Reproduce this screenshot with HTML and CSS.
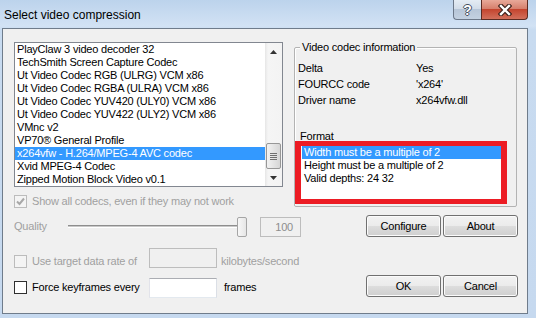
FILE: index.html
```html
<!DOCTYPE html>
<html lang="en">

<head>
    <meta charset="UTF-8">
    <title>Select video compression</title>
    <link rel="stylesheet" href="styles.css">
</head>

<body>
    <div class="window">
        <div class="titlebar">
            <span class="title">Select video compression</span>
            <div class="caption-btns">
                <span class="cap help">?</span>
                <span class="cap close">
                    <svg width="14" height="12" viewBox="0 0 14 12">
                        <path d="M3 2 L11 10 M11 2 L3 10" stroke="#3e221c" stroke-width="4.6" stroke-linecap="square" fill="none" />
                        <path d="M3 2 L11 10 M11 2 L3 10" stroke="#fff" stroke-width="2.4" stroke-linecap="square" fill="none" />
                    </svg>
                </span>
            </div>
        </div>

        <div class="client">
            <div class="top">
                <div class="left-col">
                    <div class="listbox">
                        <ul class="items">
                            <li>PlayClaw 3 video decoder 32</li>
                            <li>TechSmith Screen Capture Codec</li>
                            <li>Ut Video Codec RGB (ULRG) VCM x86</li>
                            <li>Ut Video Codec RGBA (ULRA) VCM x86</li>
                            <li>Ut Video Codec YUV420 (ULY0) VCM x86</li>
                            <li>Ut Video Codec YUV422 (ULY2) VCM x86</li>
                            <li>VMnc v2</li>
                            <li>VP70® General Profile</li>
                            <li class="selected">x264vfw - H.264/MPEG-4 AVC codec</li>
                            <li>Xvid MPEG-4 Codec</li>
                            <li>Zipped Motion Block Video v0.1</li>
                        </ul>
                        <div class="scrollbar">
                            <div class="sb-btn">
                                <svg width="7" height="4" viewBox="0 0 7 4"><path d="M0 4 L3.5 0 L7 4 Z" fill="#333" /></svg>
                            </div>
                            <div class="sb-track">
                                <div class="sb-thumb">
                                    <svg width="7" height="8" viewBox="0 0 7 8">
                                        <path d="M0 1.5 H7 M0 3.5 H7 M0 5.5 H7 M0 7.5 H7" stroke="#6f6f6f" stroke-width="1" />
                                    </svg>
                                </div>
                            </div>
                            <div class="sb-btn">
                                <svg width="7" height="4" viewBox="0 0 7 4"><path d="M0 0 L3.5 4 L7 0 Z" fill="#333" /></svg>
                            </div>
                        </div>
                    </div>
                    <label class="check disabled show-all">
                        <span class="box">
                            <svg width="11" height="11" viewBox="0 0 11 11"><path d="M2 5.5 L4.5 8 L9 2.5" stroke="#a8a8a8" stroke-width="2" fill="none" /></svg>
                        </span>
                        Show all codecs, even if they may not work
                    </label>
                </div>

                <div class="group">
                    <span class="legend">Video codec information</span>
                    <div class="info">
                        <span>Delta</span><span>Yes</span>
                        <span>FOURCC code</span><span>'x264'</span>
                        <span>Driver name</span><span>x264vfw.dll</span>
                    </div>
                    <div class="format-label">Format</div>
                    <ul class="format-list">
                        <li class="selected">Width must be a multiple of 2</li>
                        <li>Height must be a multiple of 2</li>
                        <li>Valid depths: 24 32</li>
                    </ul>
                </div>
            </div>

            <div class="row row-quality">
                <span class="quality-label">Quality</span>
                <div class="slider">
                    <div class="track"></div>
                    <div class="thumb"></div>
                </div>
                <div class="edit disabled num">100</div>
                <div class="btns">
                    <button>Configure</button>
                    <button>About</button>
                </div>
            </div>

            <div class="row row-rate">
                <label class="check disabled wide"><span class="box"></span>Use target data rate of</label>
                <div class="edit disabled"></div>
                <span class="unit disabled-text">kilobytes/second</span>
            </div>

            <div class="row row-keys">
                <label class="check wide"><span class="box"></span>Force keyframes every</label>
                <div class="edit"></div>
                <span class="unit frames">frames</span>
                <div class="btns">
                    <button>OK</button>
                    <button>Cancel</button>
                </div>
            </div>
        </div>
    </div>
</body>

</html>
```

FILE: styles.css
```css
body {
    margin: 0;
    font-family: "Liberation Sans", Arial, sans-serif;
    font-size: 11px;
    letter-spacing: -0.2px;
    color: #000;
}

.window {
    width: 536px;
    height: 318px;
    box-sizing: border-box;
    padding: 0 8px 4px 2px;
    display: flex;
    flex-direction: column;
    background: linear-gradient(to bottom, #bcd3ec 0, #d2e2f4 26px, #c8dbf0 30px, #c6d9ef 100%);
}

/* title bar */
.titlebar {
    height: 28px;
    display: flex;
    align-items: flex-start;
    flex-shrink: 0;
}

.title {
    flex: 1;
    padding-left: 2px;
    margin-top: 8px;
    line-height: 14px;
    font-size: 12px;
    letter-spacing: 0;
}

.caption-btns {
    display: flex;
}

.cap {
    height: 20px;
    box-sizing: border-box;
    display: flex;
    align-items: center;
    justify-content: center;
}

.help {
    width: 28px;
    border: 1px solid #6c7889;
    border-top: none;
    border-right: none;
    border-radius: 0 0 0 4px;
    background: linear-gradient(to bottom, #e4ecf4 0%, #d3dde9 45%, #b7c6d8 50%, #c3d1e1 100%);
    font-weight: bold;
    font-size: 14px;
    color: #fff;
    text-shadow: 1px 0 0 #45505e, -1px 0 0 #45505e, 0 1px 0 #45505e, 0 -1px 0 #45505e;
}

.close {
    width: 47px;
    border: 1px solid #5b2b22;
    border-top: none;
    border-radius: 0 0 4px 0;
    background: linear-gradient(to bottom, #e8a999 0%, #d6806d 45%, #c4452f 50%, #d2705c 100%);
}

/* client area */
.client {
    flex: 1;
    background: #f0f0f0;
    border: 1px solid #6f7c8b;
    padding: 13px 9px 0 11px;
    display: flex;
    flex-direction: column;
}

.top {
    display: flex;
    align-items: flex-start;
    height: 166px;
    flex-shrink: 0;
}

.left-col {
    width: 269px;
}

.listbox {
    height: 145px;
    box-sizing: border-box;
    border: 1px solid #828790;
    background: #fff;
    display: flex;
}

.items {
    flex: 1;
    list-style: none;
    margin: 0;
    padding: 0;
}

.items li,
.format-list li {
    height: 13px;
    line-height: 13px;
    padding-left: 2px;
    white-space: nowrap;
}

.selected {
    background: #3399ff;
    color: #fff;
}

.scrollbar {
    width: 17px;
    display: flex;
    flex-direction: column;
    background: linear-gradient(to right, #e6e6e6, #f5f5f5 3px, #f3f3f3);
}

.sb-btn {
    height: 17px;
    display: flex;
    align-items: center;
    justify-content: center;
}

.sb-track {
    flex: 1;
    display: flex;
    flex-direction: column;
    justify-content: flex-end;
    padding: 0 1px;
}

.sb-thumb {
    height: 26px;
    box-sizing: border-box;
    border: 1px solid #979797;
    border-radius: 2px;
    background: linear-gradient(to right, #f2f2f2, #e4e4e4 50%, #d6d6d6);
    display: flex;
    align-items: center;
    justify-content: center;
}

/* checkboxes */
.check {
    display: flex;
    align-items: center;
    gap: 5px;
    height: 13px;
    line-height: 13px;
    white-space: nowrap;
}

.box {
    width: 13px;
    height: 13px;
    box-sizing: border-box;
    border: 1px solid #2f2f2f;
    background: #fff;
    flex-shrink: 0;
    display: flex;
    align-items: center;
    justify-content: center;
}

.check.disabled {
    color: #a0a0a0;
}

.check.disabled .box {
    border-color: #bcbcbc;
    background: #f4f4f4;
}

.show-all {
    margin-top: 8px;
}

/* group box */
.group {
    width: 223px;
    height: 160px;
    box-sizing: border-box;
    margin: 5px 0 0 11px;
    border: 1px solid #b3b3b3;
    border-radius: 2px;
    box-shadow: inset 1px 1px 0 #fff;
}

.legend {
    display: block;
    width: fit-content;
    margin: -7px 0 0 5px;
    padding: 0 2px;
    line-height: 13px;
    background: #f0f0f0;
}

.info {
    display: grid;
    grid-template-columns: 118px auto;
    grid-auto-rows: 16px;
    line-height: 16px;
    margin-top: 6px;
    padding-left: 3px;
}

.format-label {
    margin: 23px 0 0 5px;
    line-height: 11px;
}

.format-list {
    list-style: none;
    margin: -1px 0 0 0;
    padding: 0 0 0 1px;
    width: 212px;
    height: 63px;
    box-sizing: border-box;
    border-style: solid;
    border-color: #ec1c24;
    border-width: 5px 6px 5px 6px;
    background: #fff;
}

/* bottom rows */
.row {
    display: flex;
    flex-shrink: 0;
}

.row-quality {
    margin-top: 7px;
    height: 22px;
    align-items: center;
}

.quality-label {
    width: 54px;
    color: #a0a0a0;
}

.slider {
    width: 179px;
    height: 20px;
    display: flex;
    align-items: center;
    margin-top: 1px;
}

.track {
    flex: 1;
    height: 1px;
    border-top: 1px solid #8e8e8e;
    border-bottom: 1px solid #fff;
    background: #c8c8c8;
}

.thumb {
    width: 10px;
    height: 20px;
    box-sizing: border-box;
    margin-left: -5px;
    border: 1px solid #a5a5a5;
    border-radius: 2px;
    background: linear-gradient(to right, #f7f7f7, #e6e6e6);
}

.edit {
    width: 68px;
    height: 20px;
    box-sizing: border-box;
    border: 1px solid #abadb3;
    border-color: #abadb3 #dbdfe6 #e3e9ef #e2e3ea;
    background: #fff;
}

.edit.disabled {
    border: 1px solid #bdbdbd;
    background: #f0f0f0;
}

.edit.num {
    width: 41px;
    margin-left: 13px;
    margin-top: 1px;
    text-align: right;
    padding-right: 7px;
    line-height: 18px;
    color: #8d8d8d;
}

.btns {
    margin-left: auto;
    display: flex;
    gap: 2px;
}

button {
    width: 75px;
    height: 22px;
    padding: 0;
    font-family: inherit;
    font-size: 11px;
    letter-spacing: -0.2px;
    color: #000;
    border: 1px solid #707070;
    border-radius: 3px;
    background: linear-gradient(to bottom, #f2f2f2 0%, #ebebeb 50%, #dddddd 50%, #cfcfcf 100%);
    box-shadow: inset 0 0 0 1px #fbfbfb;
}

.row-rate {
    margin-top: 11px;
    height: 20px;
    align-items: flex-start;
}

.wide {
    width: 135px;
    margin-top: 7px;
}

.unit {
    margin-top: 7px;
    line-height: 13px;
    margin-left: 4px;
}

.disabled-text {
    color: #a0a0a0;
}

.row-keys {
    margin-top: 7px;
    height: 23px;
    align-items: flex-start;
}

.row-keys .edit {
    margin-top: 3px;
}

.row-keys .wide {
    margin-top: 6px;
}

.unit.frames {
    margin-left: 7px;
    margin-top: 6px;
}
```
